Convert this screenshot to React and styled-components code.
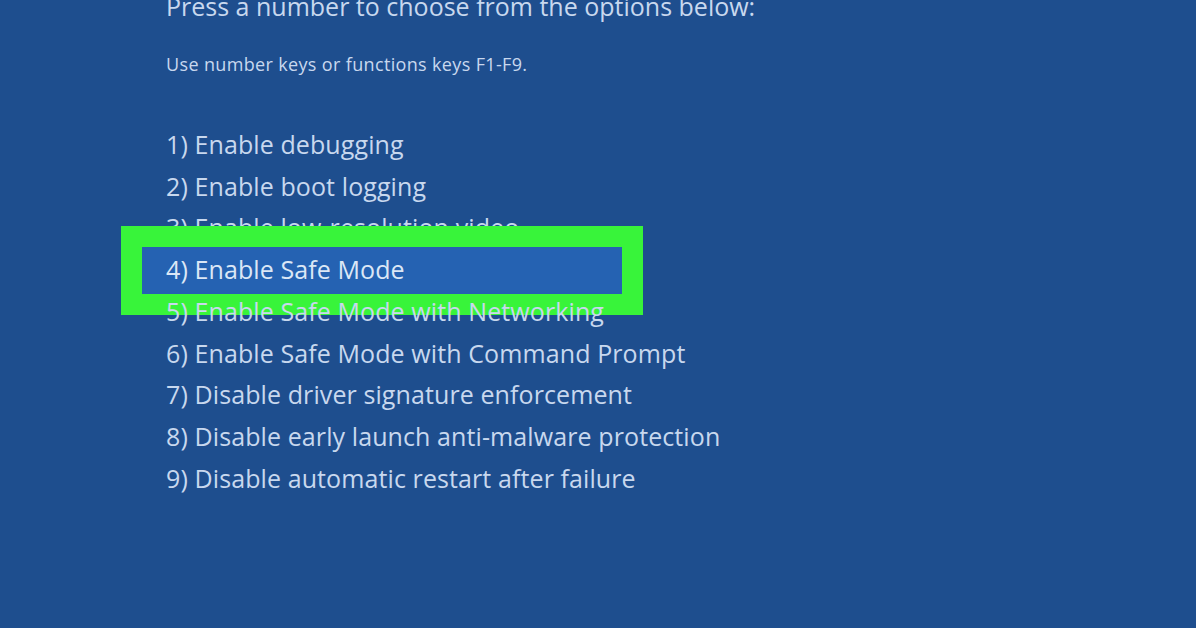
import React from 'react'
import styled, { createGlobalStyle } from 'styled-components'

const GlobalStyle = createGlobalStyle`
  html, body {
    margin: 0;
    padding: 0;
    background: #1e4e8e;
  }
  body {
    font-family: "Open Sans", "Noto Sans", sans-serif;
  }
`

const Screen = styled.div`
  width: 1196px;
  height: 628px;
  overflow: hidden;
  background: #1e4e8e;
  color: #c8d8ee;
  padding-left: 166px;
  box-sizing: border-box;
`

const Title = styled.div`
  font-size: 25px;
  line-height: 24px;
  margin-top: -6px;
  white-space: nowrap;
`

const Hint = styled.div`
  font-size: 18px;
  line-height: 20px;
  letter-spacing: 0.35px;
  margin-top: 36px;
  white-space: nowrap;
`

const OptionList = styled.ol`
  list-style: none;
  margin: 50px 0 0;
  padding: 0;
`

const Option = styled.li`
  position: relative;
  font-size: 25px;
  line-height: 41.7px;
  letter-spacing: 0.1px;
  white-space: nowrap;
  margin-left: ${p => (p.$selected ? '-24px' : '0')};
  padding-left: ${p => (p.$selected ? '24px' : '0')};
  width: ${p => (p.$selected ? '456px' : 'auto')};
  background: ${p => (p.$selected ? '#2562b2' : 'transparent')};
  box-shadow: ${p => (p.$selected ? '0 -2px 0 #2562b2, 0 3px 0 #2562b2' : 'none')};
  color: ${p => (p.$selected ? '#dbe7f6' : 'inherit')};
`

const Highlight = styled.span`
  position: absolute;
  top: -23px;
  bottom: -24px;
  left: -21px;
  width: 522px;
  border: 21px solid #38f43a;
  box-sizing: border-box;
  pointer-events: none;
`

const options = [
  'Enable debugging',
  'Enable boot logging',
  'Enable low-resolution video',
  'Enable Safe Mode',
  'Enable Safe Mode with Networking',
  'Enable Safe Mode with Command Prompt',
  'Disable driver signature enforcement',
  'Disable early launch anti-malware protection',
  'Disable automatic restart after failure',
]

export default function App() {
  return (
    <>
      <GlobalStyle />
      <Screen>
        <Title>Press a number to choose from the options below:</Title>
        <Hint>Use number keys or functions keys F1-F9.</Hint>
        <OptionList>
          {options.map((label, i) => (
            <Option key={label} $selected={i === 3}>
              {i + 1}) {label}
              {i === 3 && <Highlight />}
            </Option>
          ))}
        </OptionList>
      </Screen>
    </>
  )
}
